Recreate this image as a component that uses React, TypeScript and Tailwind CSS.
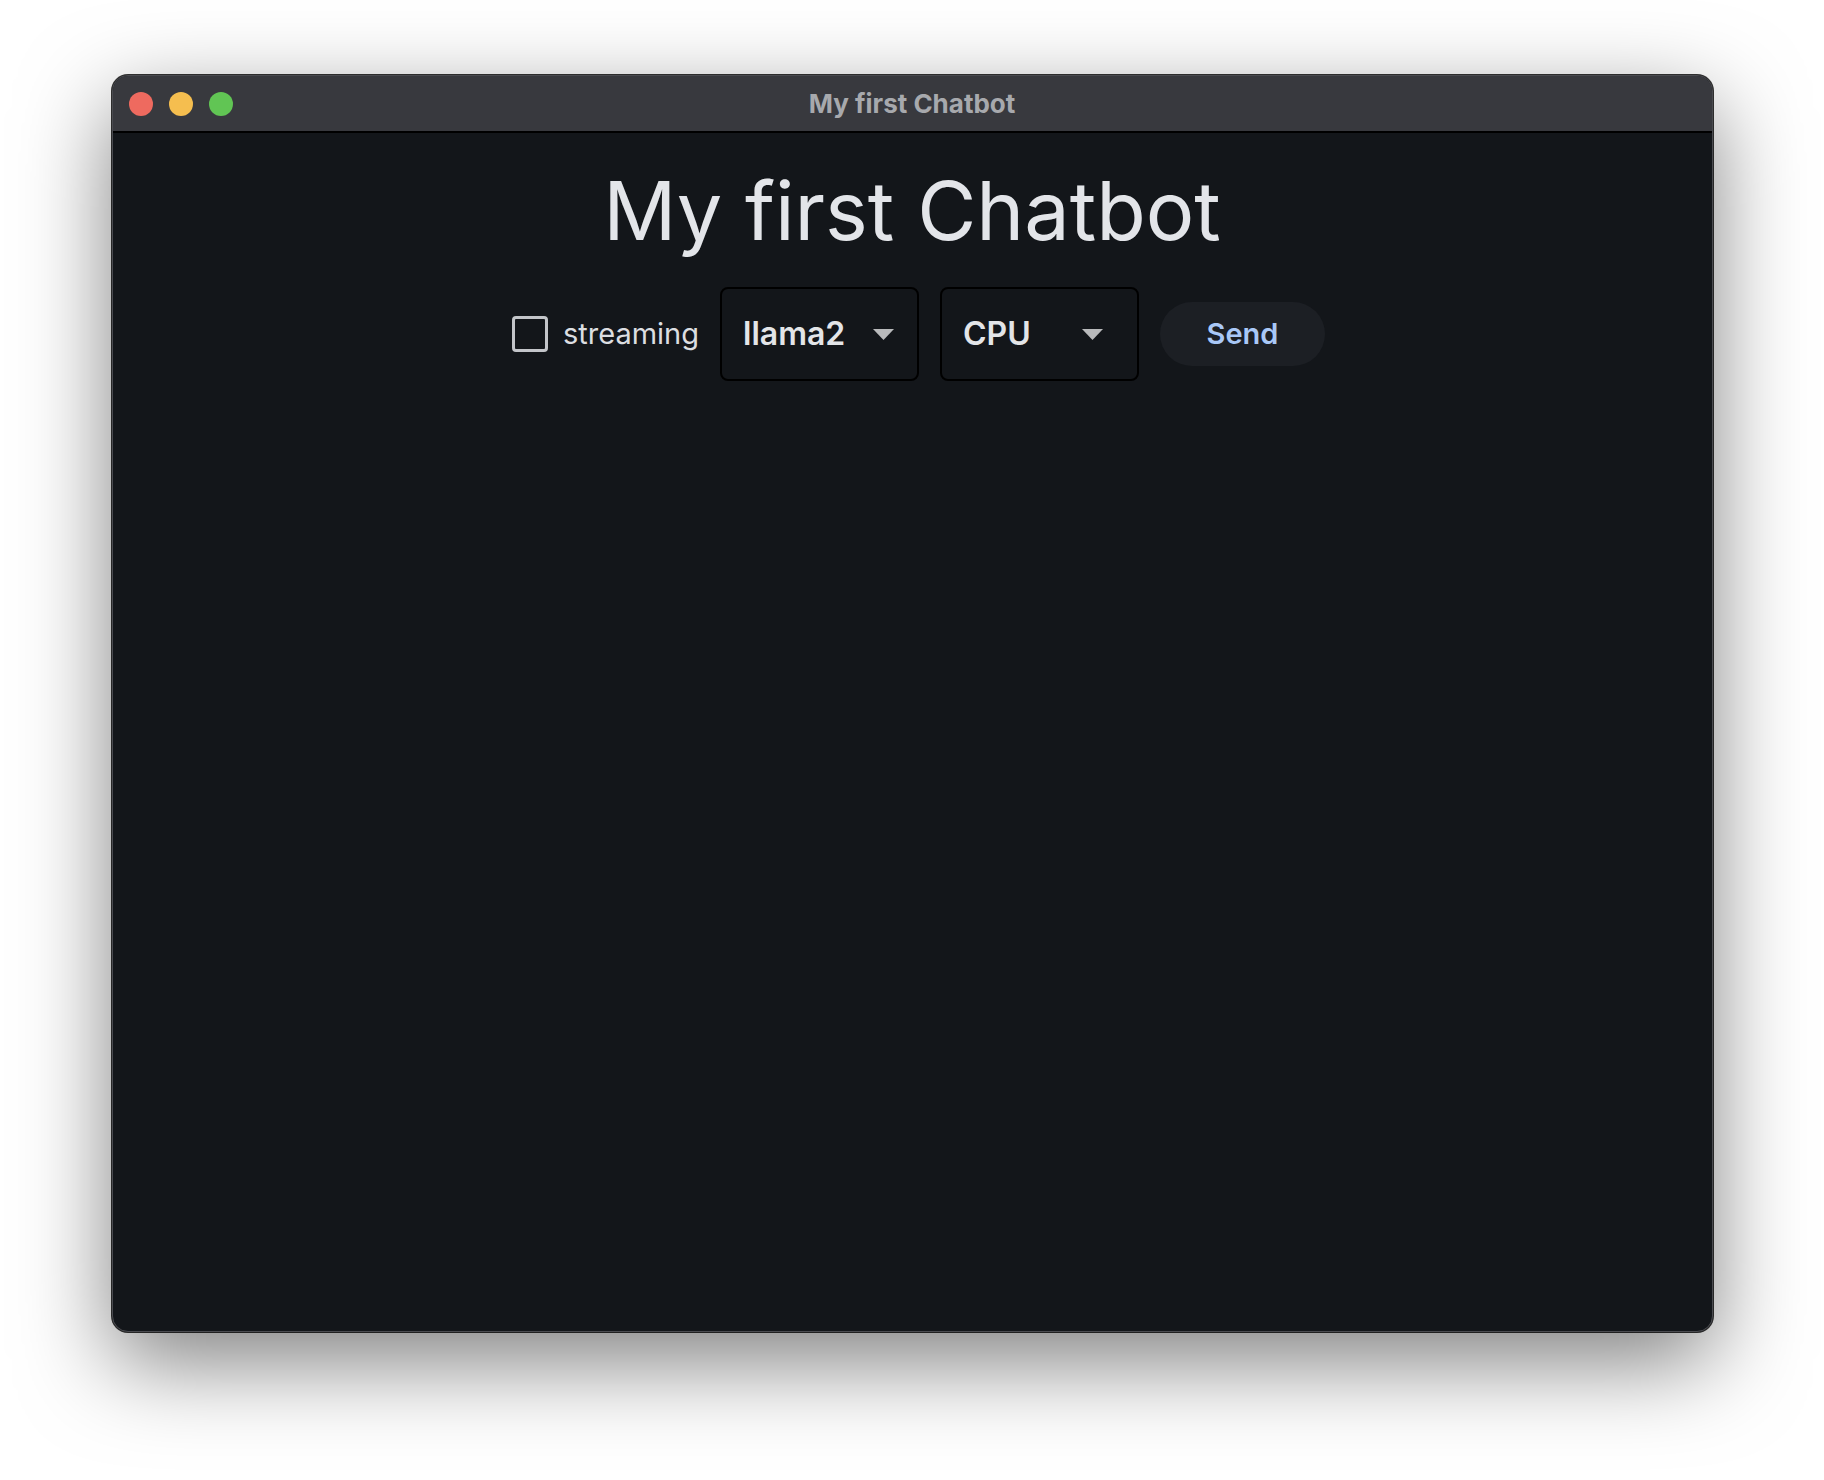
const Caret = () => (
  <svg width="21" height="11" viewBox="0 0 21 11" className="shrink-0">
    <path d="M0 0 H21 L10.5 11 Z" fill="#b9babc" />
  </svg>
);

const Dropdown = ({ label, right }: { label: string; right: string }) => (
  <div
    className={`flex h-[94px] w-[199px] items-center justify-between rounded-[8px] border-2 border-black bg-[#13161a] pl-[21px] ${right}`}
  >
    <span className="text-[32px] font-semibold text-[#e3e5e8]">{label}</span>
    <Caret />
  </div>
);

export default function App() {
  return (
    <div className="min-h-[1480px] w-full bg-white pt-[75px] font-['Inter',sans-serif]">
      <div className="mx-auto flex h-[1257px] w-[1601px] flex-col overflow-hidden rounded-[16px] border border-[#4a4b50] bg-[#13161a] shadow-[0_0_0_1px_rgba(0,0,0,0.8),0_30px_90px_rgba(0,0,0,0.5)]">
        {/* title bar */}
        <div className="relative flex h-[57px] shrink-0 items-center justify-center border-b-2 border-black bg-[#38393e]">
          <div className="absolute left-[16px] top-[16px] flex gap-[16px]">
            <span className="h-[24px] w-[24px] rounded-full bg-[#ee6a5f]" />
            <span className="h-[24px] w-[24px] rounded-full bg-[#f5be4f]" />
            <span className="h-[24px] w-[24px] rounded-full bg-[#61c554]" />
          </div>
          <span className="text-[26px] font-bold text-[#a7a9ad]">My first Chatbot</span>
        </div>

        {/* content */}
        <div className="flex flex-col items-center">
          <h1 className="mt-[30px] text-[81px] font-normal leading-[96px] text-[#e3e5e9]">
            My first Chatbot
          </h1>
          <div className="ml-[13px] mt-[28px] flex items-center gap-[21px]">
            <label className="flex items-center gap-[15px]">
              <span className="h-[36px] w-[36px] rounded-[4px] border-[3px] border-[#c3c5c9]" />
              <span className="text-[29px] text-[#dcdee1]">streaming</span>
            </label>
            <Dropdown label="llama2" right="pr-[23px]" />
            <Dropdown label="CPU" right="pr-[34px]" />
            <button className="h-[64px] w-[165px] rounded-full bg-[#1c1f24] text-[29px] font-semibold text-[#a9c8f7]">
              Send
            </button>
          </div>
        </div>
      </div>
    </div>
  );
}
